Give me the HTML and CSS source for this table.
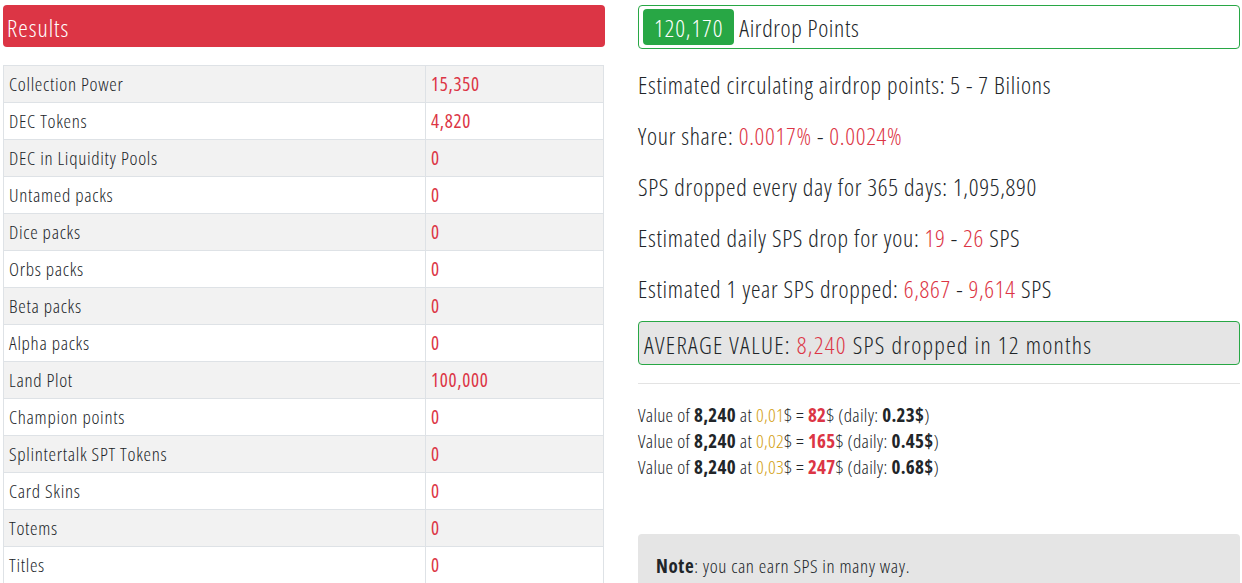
FILE: index.html
```html
<!DOCTYPE html>
<html>
<head>
<meta charset="utf-8">
<link rel="stylesheet" href="styles.css">
</head>
<body>
<div class="page">
  <section class="left">
    <div class="results-header">Results</div>
    <table class="results">
      <tr><td>Collection Power</td><td class="v">15,350</td></tr>
      <tr><td>DEC Tokens</td><td class="v">4,820</td></tr>
      <tr><td>DEC in Liquidity Pools</td><td class="v">0</td></tr>
      <tr><td>Untamed packs</td><td class="v">0</td></tr>
      <tr><td>Dice packs</td><td class="v">0</td></tr>
      <tr><td>Orbs packs</td><td class="v">0</td></tr>
      <tr><td>Beta packs</td><td class="v">0</td></tr>
      <tr><td>Alpha packs</td><td class="v">0</td></tr>
      <tr><td>Land Plot</td><td class="v">100,000</td></tr>
      <tr><td>Champion points</td><td class="v">0</td></tr>
      <tr><td>Splintertalk SPT Tokens</td><td class="v">0</td></tr>
      <tr><td>Card Skins</td><td class="v">0</td></tr>
      <tr><td>Totems</td><td class="v">0</td></tr>
      <tr><td>Titles</td><td class="v">0</td></tr>
    </table>
  </section>
  <section class="right">
    <div class="points-box"><span class="badge">120,170</span> Airdrop Points</div>
    <p class="stat">Estimated circulating airdrop points: 5 - 7 Bilions</p>
    <p class="stat">Your share: <span class="red">0.0017%</span> - <span class="red">0.0024%</span></p>
    <p class="stat">SPS dropped every day for 365 days: 1,095,890</p>
    <p class="stat">Estimated daily SPS drop for you: <span class="red">19</span> - <span class="red">26</span> SPS</p>
    <p class="stat">Estimated 1 year SPS dropped: <span class="red">6,867</span> - <span class="red">9,614</span> SPS</p>
    <div class="avg-box">AVERAGE VALUE: <span class="red">8,240</span> SPS dropped in 12 months</div>
    <hr class="sep">
    <div class="values">
      <div>Value of <b>8,240</b> at <span class="gold">0,01</span>$ = <b class="red">82</b>$ (daily: <b>0.23$</b>)</div>
      <div>Value of <b>8,240</b> at <span class="gold">0,02</span>$ = <b class="red">165</b>$ (daily: <b>0.45$</b>)</div>
      <div>Value of <b>8,240</b> at <span class="gold">0,03</span>$ = <b class="red">247</b>$ (daily: <b>0.68$</b>)</div>
    </div>
    <div class="note"><b>Note</b>: you can earn SPS in many way.</div>
  </section>
</div>
</body>
</html>
```
FILE: styles.css
```css
html, body {
  margin: 0;
  padding: 0;
  background: #fff;
}
body {
  font-family: "Open Sans", "Noto Sans", sans-serif;
  font-stretch: 75%;
  font-weight: 300;
  color: #212529;
  overflow: hidden;
}
.page {
  display: grid;
  grid-template-columns: 1fr 1fr;
  column-gap: 33px;
  padding: 5px 2px 0 3px;
}
.results-header {
  background: #dc3545;
  color: #fff;
  border-radius: 4px;
  height: 42px;
  font-size: 24px;
  letter-spacing: 1px;
  line-height: 46px;
  padding-left: 4px;
  box-sizing: border-box;
}
.results {
  margin-top: 18px;
  width: 601px;
  border-collapse: collapse;
  font-size: 19px;
  letter-spacing: 0.7px;
}
.results td {
  border: 1px solid #dee2e6;
  height: 37px;
  padding: 0 5px;
  box-sizing: border-box;
  line-height: 36px;
}
.results td:first-child {
  width: 422px;
}
.results tr:nth-child(odd) {
  background: #f2f2f2;
}
.results .v {
  color: #dc3545;
  font-weight: 400;
}
.points-box {
  border: 1px solid #28a745;
  border-radius: 4px;
  height: 44px;
  box-sizing: border-box;
  padding: 3px 4px;
  display: flex;
  align-items: center;
  font-size: 24px;
  letter-spacing: 0.65px;
}
.badge {
  background: #28a745;
  color: #fff;
  border-radius: 4px;
  height: 36px;
  line-height: 38px;
  padding: 0 11px;
  margin-right: 5px;
  letter-spacing: 0.85px;
}
.stat {
  font-size: 24px;
  letter-spacing: 0.7px;
  line-height: 34px;
  margin: 0;
}
.stat:first-of-type {
  margin-top: 19px;
}
.stat + .stat {
  margin-top: 17px;
}
.red { color: #dc3545; }
.gold { color: #d29d0c; }
.avg-box {
  margin-top: 15px;
  background: #e5e5e5;
  border: 1px solid #28a745;
  border-radius: 4px;
  height: 44px;
  box-sizing: border-box;
  padding: 0 5px;
  font-size: 24px;
  letter-spacing: 1.3px;
  line-height: 46px;
}
.sep {
  border: 0;
  border-top: 1px solid #e3e3e3;
  margin: 18px 0 18px;
}
.values {
  font-size: 19px;
  letter-spacing: 0.3px;
  line-height: 26px;
}
.values b {
  font-weight: 700;
}
.note {
  margin-top: 54px;
  background: #e5e5e5;
  border-radius: 4px;
  padding: 19px 18px;
  font-size: 19px;
  letter-spacing: 0.6px;
  line-height: 26px;
}
.note b {
  font-weight: 700;
}
```
